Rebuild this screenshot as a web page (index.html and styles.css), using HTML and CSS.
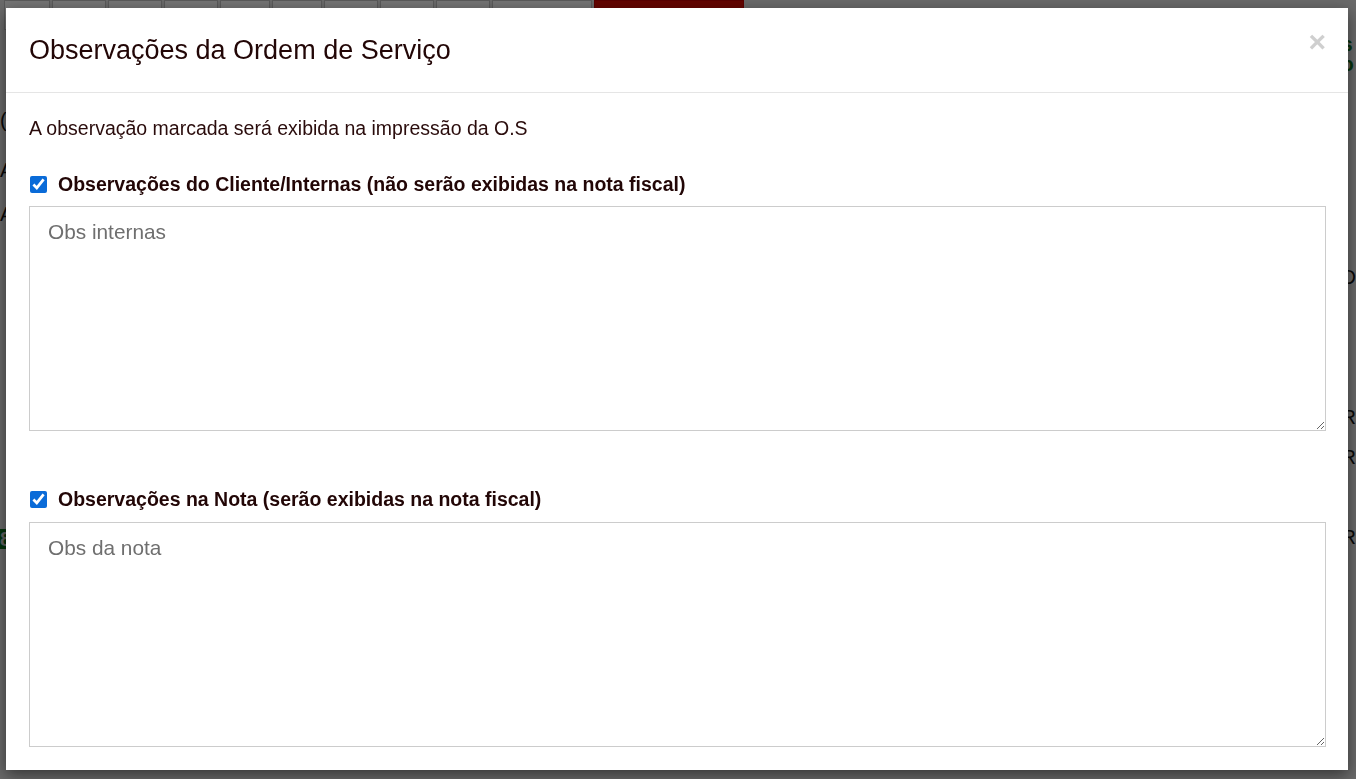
FILE: index.html
```html
<!DOCTYPE html>
<html lang="pt-BR">
<head>
<meta charset="utf-8">
<title>Observações da Ordem de Serviço</title>
<link rel="stylesheet" href="styles.css">
</head>
<body>
<div class="page">
  <div class="toolbar">
    <span class="tb-btn w46"></span>
    <span class="tb-btn w56"></span>
    <span class="tb-btn w56"></span>
    <span class="tb-btn w56"></span>
    <span class="tb-btn w50"></span>
    <span class="tb-btn w50"></span>
    <span class="tb-btn w56"></span>
    <span class="tb-btn w56"></span>
    <span class="tb-btn w56"></span>
    <span class="tb-btn w100"></span>
    <span class="tb-btn red"></span>
  </div>
  <div class="side-left">
    <span class="l1">(</span>
    <span class="l2">A</span>
    <span class="l3">A</span>
    <span class="l4 g">8</span>
  </div>
  <div class="side-right">
    <span class="r1 g">s</span>
    <span class="r2 g">o</span>
    <span class="r3 d">D</span>
    <span class="r4">R</span>
    <span class="r5">R</span>
    <span class="r6">R</span>
  </div>
</div>
<div class="overlay"></div>
<div class="modal">
  <div class="modal-header">
    <h4 class="modal-title">Observações da Ordem de Serviço</h4>
    <button class="close" type="button">×</button>
  </div>
  <div class="modal-body">
    <p class="hint">A observação marcada será exibida na impressão da O.S</p>
    <label class="check"><input type="checkbox" checked> Observações do Cliente/Internas (não serão exibidas na nota fiscal)</label>
    <textarea class="obs" placeholder="Obs internas"></textarea>
    <label class="check second"><input type="checkbox" checked> Observações na Nota (serão exibidas na nota fiscal)</label>
    <textarea class="obs" placeholder="Obs da nota"></textarea>
  </div>
</div>
</body>
</html>
```
FILE: styles.css
```css
html, body {
  margin: 0;
  height: 100%;
  overflow: hidden;
}
body {
  font-family: "Liberation Sans", Arial, sans-serif;
  background: #dcdcdc;
}
.page {
  height: 100%;
  position: relative;
}
.toolbar {
  display: flex;
  gap: 2px;
  padding-left: 4px;
}
.tb-btn {
  height: 30px;
  background: #f2f2f2;
  border: 1px solid #bbb;
  box-sizing: border-box;
}
.w46 { width: 46px; }
.w50 { width: 50px; }
.w56 { width: 54px; }
.w100 { width: 100px; }
.tb-btn.red {
  width: 150px;
  background: #d20a00;
  border-color: #b00;
}
.side-left,
.side-right {
  position: absolute;
  top: 0;
  display: flex;
  flex-direction: column;
  font-size: 20px;
  line-height: 20px;
  color: #111;
}
.side-left { left: 0; }
.side-right { right: 0; }
.g { color: #0b6b1a; font-weight: bold; }
.l1 { margin-top: 110px; }
.l2 { margin-top: 30px; }
.l3 { margin-top: 24px; }
.l4 { margin-top: 305px; background: #0b6b1a; color: #ccc; }
.r1 { margin-top: 34px; }
.r2 { margin-top: 0; }
.r3 { margin-top: 193px; }
.r4 { margin-top: 120px; }
.r5 { margin-top: 20px; }
.r6 { margin-top: 60px; }
.overlay {
  position: fixed;
  inset: 0;
  background: rgba(0, 0, 0, 0.52);
}
.modal {
  position: fixed;
  left: 6px;
  top: 8px;
  width: 1342px;
  height: 762px;
  background: #fff;
  box-shadow: 0 5px 15px rgba(0, 0, 0, 0.5);
  color: #220606;
}
.modal-header {
  display: flex;
  align-items: center;
  justify-content: space-between;
  height: 84px;
  padding: 0 22px 0 23px;
  border-bottom: 1px solid #e5e5e5;
}
.modal-title {
  margin: 0;
  font-size: 27px;
  font-weight: normal;
  color: #220606;
}
.close {
  border: 0;
  background: none;
  padding: 0;
  margin-top: -16px;
  font-family: "Liberation Sans", Arial, sans-serif;
  font-size: 30px;
  font-weight: bold;
  line-height: 1;
  color: #cfcfcf;
}
.modal-body {
  padding: 22px 22px 0 23px;
  display: flex;
  flex-direction: column;
}
.hint {
  margin: 0 0 31px;
  font-size: 19.5px;
  line-height: 26px;
  color: #2a0c0c;
}
.check {
  display: flex;
  align-items: center;
  gap: 0;
  font-weight: bold;
  font-size: 19.5px;
  line-height: 24px;
  color: #220606;
  margin-bottom: 11px;
}
.check input {
  width: 17px;
  height: 17px;
  margin: 0 11px 0 1px;
  accent-color: #0a6bd8;
}
.check.second {
  margin-top: 56px;
}
.obs {
  display: block;
  box-sizing: border-box;
  width: 1297px;
  height: 225px;
  border: 1px solid #cccccc;
  padding: 13px 18px;
  font-family: "Liberation Sans", Arial, sans-serif;
  font-size: 20.8px;
  color: #333;
  resize: vertical;
  outline: none;
}
.obs:first-of-type {
  margin-top: -1px;
}
.obs::placeholder {
  color: #6f6f6f;
}
```
